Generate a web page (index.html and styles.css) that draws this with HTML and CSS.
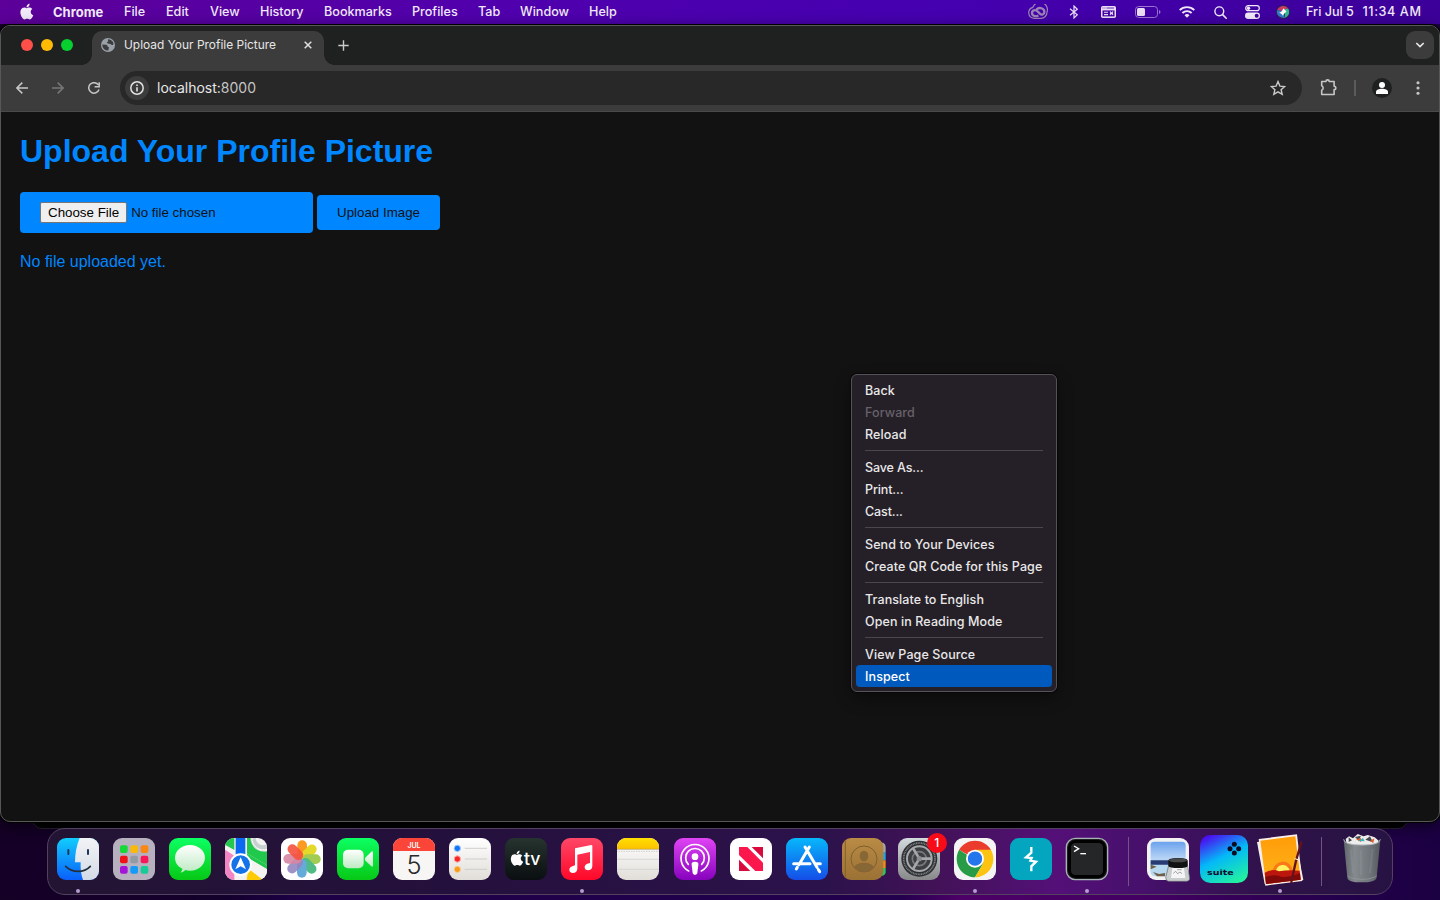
FILE: index.html
```html
<!DOCTYPE html>
<html lang="en">
<head>
<meta charset="utf-8">
<title>Upload Your Profile Picture</title>
<link rel="stylesheet" href="styles.css">
</head>
<body>
<svg class="defs" width="0" height="0" aria-hidden="true">
  <defs>
    <clipPath id="tile"><rect width="126" height="126" rx="27"/></clipPath>
    <path id="apple" d="M17.5 12.6c0-2.6 2.1-3.9 2.2-4-1.2-1.8-3.1-2-3.7-2-1.6-.2-3.1.9-3.9.9s-2-.9-3.4-.9C7 6.700 5.300 7.600 4.400 9.200c-1.900 3.300-.5 8.100 1.400 10.800.9 1.300 2 2.800 3.400 2.700 1.400-.1 1.900-.9 3.500-.9s2.100.9 3.500.9c1.500 0 2.400-1.300 3.300-2.600 1-1.500 1.500-3 1.500-3-.1-.1-3.500-1.400-3.500-4.500zM14.900 4.800c.7-.9 1.200-2.100 1.100-3.300-1.100 0-2.300.7-3.100 1.600-.7.8-1.300 2-1.100 3.200 1.200.1 2.400-.6 3.100-1.500z"/>
    <linearGradient id="gFinder" x2="0" y2="1"><stop stop-color="#12cdfd"/><stop offset="1" stop-color="#0a60fb"/></linearGradient>
    <linearGradient id="gPale" x2="0" y2="1"><stop stop-color="#f3f3f6"/><stop offset="1" stop-color="#d3dbe7"/></linearGradient>
    <linearGradient id="gGreen" x2="0" y2="1"><stop stop-color="#0cff63"/><stop offset="1" stop-color="#07c815"/></linearGradient>
    <linearGradient id="gBubble" x2="0" y2="1"><stop stop-color="#fff"/><stop offset="1" stop-color="#bdeac2"/></linearGradient>
    <linearGradient id="gTv" x2="0" y2="1"><stop stop-color="#26342f"/><stop offset="1" stop-color="#0a0e10"/></linearGradient>
    <linearGradient id="gMusic" x2="0" y2="1"><stop stop-color="#ff4767"/><stop offset="1" stop-color="#ff0728"/></linearGradient>
    <linearGradient id="gNote" x2="0" y2="1"><stop stop-color="#fff"/><stop offset="1" stop-color="#e1ded9"/></linearGradient>
    <linearGradient id="gYellow" x2="0" y2="1"><stop stop-color="#ffdf00"/><stop offset="1" stop-color="#fdc000"/></linearGradient>
    <linearGradient id="gPod" x2="0" y2="1"><stop stop-color="#e044f5"/><stop offset="1" stop-color="#8703bd"/></linearGradient>
    <linearGradient id="gStore" x2="0" y2="1"><stop stop-color="#07b7fb"/><stop offset="1" stop-color="#154ee8"/></linearGradient>
    <linearGradient id="gBook" x2="0" y2="1"><stop stop-color="#b98b45"/><stop offset="1" stop-color="#9b7135"/></linearGradient>
    <linearGradient id="gGear" x2="0" y2="1"><stop stop-color="#d2dadc"/><stop offset="1" stop-color="#88888a"/></linearGradient>
    <linearGradient id="gSuite" x1=".25" y1="0" x2=".75" y2="1"><stop stop-color="#4a10f0"/><stop offset=".45" stop-color="#04b8f8"/><stop offset="1" stop-color="#22f2a0"/></linearGradient>
    <linearGradient id="gSun" x2="0" y2="1"><stop stop-color="#ff9d08"/><stop offset="1" stop-color="#ffb31c"/></linearGradient>
    <linearGradient id="gBin" x2="1" y2="0"><stop stop-color="#60666a"/><stop offset=".3" stop-color="#858a8e"/><stop offset=".7" stop-color="#70767b"/><stop offset="1" stop-color="#54595e"/></linearGradient>
    <linearGradient id="gSky" x2="0" y2="1"><stop stop-color="#6aa2ed"/><stop offset=".5" stop-color="#b8d4f5"/></linearGradient>
  </defs>
</svg>

<header class="menubar">
  <nav class="menus">
    <svg class="apple-logo" viewBox="3 1 19 22"><use href="#apple"/></svg>
    <span class="app-name">Chrome</span><span>File</span><span>Edit</span><span>View</span><span>History</span><span>Bookmarks</span><span>Profiles</span><span>Tab</span><span>Window</span><span>Help</span>
  </nav>
  <div class="tray">
    <svg viewBox="0 0 20 16" width="20" height="16"><path d="M6 14.300A5.600 5.600 0 0 1 4.900 3.300 7.300 7.300 0 0 1 19 8.200a6 6 0 0 1-6 6.100z" fill="none" stroke="#9c84b6" stroke-width="1.200"/><path d="M10.400 11.400c-2.800 1.600-6.400.6-6.400-2.300 0-3 3.400-3.800 5.600-1.700l2.200 2.200c1.800 1.800 4.600.8 4.600-1.700 0-3.700-5.200-5.200-8-2.400" fill="none" stroke="#9c84b6" stroke-width="2.300"/></svg>
    <svg viewBox="0 0 10 14" width="10" height="14"><path d="M1 3.700l7.300 6.100L5 13V1l3.300 3.200L1 10.300" fill="none" stroke="#e9def5" stroke-width="1.200"/></svg>
    <svg viewBox="0 0 15 12" width="15" height="12"><rect width="15" height="12" rx="1.800" fill="#e9def5"/><path d="M1.500 4.400h12v6h-12z" fill="#4500a5"/><path d="M1.500 2h1M3.500 2h1M5.500 2h7.500" stroke="#4500a5" stroke-width=".8"/><path d="M3 6.300h4M3 8.600h4M9 5.500l3 3.500M12 5.500L9 9M9 7.200h3" stroke="#e9def5" stroke-width="1.100"/></svg>
    <svg viewBox="0 0 26 12" width="26" height="12"><rect x=".5" y=".5" width="22" height="11" rx="3.200" fill="none" stroke="#9975d0"/><rect x="2" y="2" width="8" height="8" rx="1.500" fill="#e9def5"/><path d="M24 4v4q1.500-.5 1.500-2T24 4z" fill="#9975d0"/></svg>
    <svg viewBox="0 0 16 12" width="16" height="12"><g fill="none" stroke="#f0e9f8" stroke-width="1.900"><path d="M.7 4.200a10.300 10.300 0 0 1 14.600 0"/><path d="M3.400 7a6.500 6.500 0 0 1 9.200 0"/></g><path d="M8 11.800L5.500 9.300a3.500 3.500 0 0 1 5 0z" fill="#f0e9f8"/></svg>
    <svg viewBox="0 0 13 13" width="13" height="13"><circle cx="5.300" cy="5.300" r="4.400" fill="none" stroke="#f0e9f8" stroke-width="1.400"/><path d="M8.600 8.600l3.600 3.600" stroke="#f0e9f8" stroke-width="1.600" stroke-linecap="round"/></svg>
    <svg viewBox="0 0 15 14" width="15" height="14"><rect x=".7" y=".7" width="13.600" height="5" rx="2.500" fill="none" stroke="#f0e9f8" stroke-width="1.200"/><circle cx="3.500" cy="3.200" r="1.700" fill="#f0e9f8"/><rect y="7.600" width="15" height="6.300" rx="3.150" fill="#f0e9f8"/><circle cx="11.700" cy="10.750" r="2" fill="#4000a2"/></svg>
    <svg viewBox="0 0 14 14" width="14" height="14"><circle cx="7" cy="7" r="7" fill="#31214e"/><path d="M1 5.500C3 0 10-.5 12.500 4 9 3 8 5 7 7 5 6 3 5 1 5.500z" fill="#c93c68"/><path d="M12.500 4c2 5-1 8.500-4.500 9C10 10 9 8 7 7c1-2 3-4 5.500-3z" fill="#31bb92"/><path d="M1 5.500C0 9 3 13 8 13c1-3 0-5-1-6-2-1.500-4-2-6-1.500z" fill="#3579c9"/><path d="M3 7c2 1 3-1 4-3s2 2 3.500 2C9 8.500 8 8 7 11 6 9 5 9 3 7z" fill="#fff"/></svg>
  </div>
  <time class="clock"><span>Fri Jul 5</span><span class="hour">11:34 AM</span></time>
</header>

<div class="back-window"></div>

<section class="window">
  <div class="tabstrip">
    <div class="lights"><i class="light close"></i><i class="light min"></i><i class="light max"></i></div>
    <div class="tab">
      <svg viewBox="0 0 14 14" width="14" height="14"><circle cx="7" cy="7" r="7" fill="#9aa0a8"/><path d="M1.300 6.500L5 6.800c1.300.2 1.800 1 1.500 2L8 9.200 7.300 12.600A5.700 5.700 0 0 1 1.300 6.500zM6.900 1.300c2.300 0 4.500 1.200 5.500 3.700l-.2 1.800c-1 .5-2.200.2-2.600-.8L6.800 5.600 5.700 4.300l1.500-.7z" fill="#3c3c3c"/></svg>
      <span class="tab-title">Upload Your Profile Picture</span>
      <svg viewBox="0 0 8 8" width="8" height="8"><path d="M.7.7l6.600 6.600M7.300.7L.7 7.300" stroke="#e0e0e0" stroke-width="1.500"/></svg>
    </div>
    <svg class="new-tab" viewBox="0 0 11 11" width="11" height="11"><path d="M5.500.3v10.400M.3 5.500h10.400" stroke="#c9cac9" stroke-width="1.400"/></svg>
    <div class="tab-search"><svg viewBox="0 0 10 6" width="10" height="6"><path d="M1.300 1L5 4.600 8.700 1" fill="none" stroke="#e4e4e4" stroke-width="1.700"/></svg></div>
  </div>
  <div class="toolbar">
    <div class="nav-buttons">
      <svg viewBox="0 0 12 12" width="12" height="12"><path d="M12 6H1M6.300.6L.9 6l5.400 5.400" fill="none" stroke="#c7c7c7" stroke-width="1.500"/></svg>
      <svg viewBox="0 0 12 12" width="12" height="12"><path d="M0 6h11M5.700.6L11.100 6l-5.400 5.400" fill="none" stroke="#777" stroke-width="1.500"/></svg>
      <svg viewBox="0 0 12 12" width="12" height="12"><path d="M10.300 2.900A5.250 5.250 0 1 0 11 7.500M11.200.2v4.600H6.600" fill="none" stroke="#c7c7c7" stroke-width="1.500"/></svg>
    </div>
    <div class="omnibox">
      <span class="site-info"><svg viewBox="0 0 14 14" width="14" height="14"><circle cx="7" cy="7" r="6.200" fill="none" stroke="#e3e3e3" stroke-width="1.500"/><path d="M7 6.200v4.200M7 3.400v1.700" stroke="#e3e3e3" stroke-width="1.600"/></svg></span>
      <span class="url">localhost:<span class="port">8000</span></span>
      <svg class="star" viewBox="0 0 16 16" width="16" height="16"><path d="M8 1.600l1.900 4.500 4.800.4-3.600 3.200 1.100 4.700L8 11.900l-4.200 2.500 1.100-4.700L1.300 6.500l4.800-.4z" fill="none" stroke="#c9c9c9" stroke-width="1.400"/></svg>
    </div>
    <div class="actions">
      <svg viewBox="0 0 17 17" width="17" height="17"><path d="M1.700 2.500H6a1.600 1.600 0 0 1 3.200 0h4.900v4.700a1.700 1.700 0 0 1 0 3.400v4.900H1.700v-4.300a2.400 2.400 0 0 0 0-4.400z" fill="none" stroke="#c7c7c7" stroke-width="1.600" stroke-linejoin="round"/></svg>
      <i class="bar-sep"></i>
      <span class="avatar"><svg viewBox="0 0 12 12" width="12" height="12" fill="#fff"><circle cx="6" cy="3" r="3"/><path d="M0 12v-2c0-2.200 3-3.200 6-3.200s6 1 6 3.200v2z"/></svg></span>
      <svg viewBox="0 0 4 14" width="4" height="14" fill="#c7c7c7"><circle cx="2" cy="1.700" r="1.550"/><circle cx="2" cy="7" r="1.550"/><circle cx="2" cy="12.300" r="1.550"/></svg>
    </div>
  </div>
  <main class="page">
    <h1>Upload Your Profile Picture</h1>
    <form class="upload-form">
      <input class="file-input" type="file">
      <button class="upload-button" type="button">Upload Image</button>
    </form>
    <p>No file uploaded yet.</p>
  </main>
</section>

<ul class="context-menu">
  <li><span>Back</span></li><li class="disabled"><span>Forward</span></li><li><span>Reload</span></li>
  <li class="rule"></li>
  <li class="dotted"><span>Save As...</span></li><li class="dotted"><span>Print...</span></li><li class="dotted"><span>Cast...</span></li>
  <li class="rule"></li>
  <li><span>Send to Your Devices</span></li><li><span>Create QR Code for this Page</span></li>
  <li class="rule"></li>
  <li><span>Translate to English</span></li><li><span>Open in Reading Mode</span></li>
  <li class="rule"></li>
  <li><span>View Page Source</span></li><li class="selected"><span>Inspect</span></li>
</ul>

<footer class="dock">
  <div class="slot running"><svg viewBox="0 0 126 126"><g clip-path="url(#tile)"><rect width="126" height="126" fill="url(#gFinder)"/><path d="M68 0C58 24 54 48 54 73h17c-1 19 1 36 7 53h48V0z" fill="url(#gPale)"/><path d="M34 36v12M93 36v12" stroke="#1d3557" stroke-width="6" stroke-linecap="round"/><path d="M26 85c20 20 55 20 74 0" fill="none" stroke="#23303c" stroke-width="5" stroke-linecap="round"/></g></svg></div>
  <div class="slot"><svg viewBox="0 0 126 126"><rect width="126" height="126" rx="27" fill="#b7b0be"/><rect x="21" y="22" width="23" height="23" rx="6" fill="#15d936"/><rect x="52" y="22" width="23" height="23" rx="6" fill="#f9b90b"/><rect x="83" y="22" width="23" height="23" rx="6" fill="#fb8713"/><rect x="21" y="53" width="23" height="23" rx="6" fill="#f01218"/><rect x="52" y="53" width="23" height="23" rx="6" fill="#929aa3"/><rect x="83" y="53" width="23" height="23" rx="6" fill="#fa1759"/><rect x="21" y="84" width="23" height="23" rx="6" fill="#a414d8"/><rect x="52" y="84" width="23" height="23" rx="6" fill="#149bf8"/><rect x="83" y="84" width="23" height="23" rx="6" fill="#16cb98"/></svg></div>
  <div class="slot"><svg viewBox="0 0 126 126"><rect width="126" height="126" rx="27" fill="url(#gGreen)"/><path d="M63 21c25 0 45 17 45 38S88 98 63 98c-5 0-10-1-14-2-4 4-9 7-15 8 4-4 6-8 6-12C26 85 18 73 18 59c0-21 20-38 45-38z" fill="url(#gBubble)"/></svg></div>
  <div class="slot"><svg viewBox="0 0 126 126"><g clip-path="url(#tile)"><rect width="126" height="126" fill="#f4f3f1"/><path d="M0 0h28v36L0 20z" fill="#24c84c"/><path d="M0 35l28 18v73H0z" fill="#f285c4"/><path d="M66 0h14l0 8c2 24 22 36 46 32v42L66 46z" fill="#20c94b"/><path d="M32 0h29v75H32z" fill="#0b69ef"/><path d="M66 46l60 36v12L66 58z" fill="#20c94b"/><path d="M66 58l60 36v32h-12L60 88z" fill="#f4f3f1"/><path d="M70 92l44 34H65z" fill="#ffcb05"/><path d="M84 0a30 30 0 0 0 42 27" fill="none" stroke="#c9d0d0" stroke-width="16"/><path d="M81 0a34 34 0 0 0 45 34" fill="none" stroke="#fff" stroke-width="3"/><circle cx="47" cy="80" r="31" fill="#1473e8" stroke="#fff" stroke-width="6"/><path d="M47 58l16 36-16-9-16 9z" fill="#fff"/></g></svg></div>
  <div class="slot"><svg viewBox="0 0 126 126"><rect width="126" height="126" rx="27" fill="#fff"/><g opacity=".93"><rect x="49" y="7" width="29" height="55" rx="14.500" fill="#fb9414"/><rect x="49" y="7" width="29" height="55" rx="14.500" fill="#e2d719" transform="rotate(45 63 63)"/><rect x="49" y="7" width="29" height="55" rx="14.500" fill="#9ac944" transform="rotate(90 63 63)"/><rect x="49" y="7" width="29" height="55" rx="14.500" fill="#43b67b" transform="rotate(135 63 63)"/><rect x="49" y="7" width="29" height="55" rx="14.500" fill="#5aa5d7" transform="rotate(180 63 63)"/><rect x="49" y="7" width="29" height="55" rx="14.500" fill="#8c7dbb" fill-opacity=".9" transform="rotate(225 63 63)"/><rect x="49" y="7" width="29" height="55" rx="14.500" fill="#d57c9b" fill-opacity=".9" transform="rotate(270 63 63)"/><rect x="49" y="7" width="29" height="55" rx="14.500" fill="#f5452d" fill-opacity=".9" transform="rotate(315 63 63)"/></g></svg></div>
  <div class="slot"><svg viewBox="0 0 126 126"><rect width="126" height="126" rx="27" fill="url(#gGreen)"/><rect x="18" y="35" width="62" height="56" rx="15" fill="url(#gBubble)"/><path d="M84 60l19-19q5-3 5 3v38q0 6-5 3L84 67z" fill="url(#gBubble)"/></svg></div>
  <div class="slot"><svg viewBox="0 0 126 126"><g clip-path="url(#tile)"><rect width="126" height="126" fill="#f7f6f5"/><rect width="126" height="39" fill="#fb4538"/></g><text class="cal-month" x="63" y="29" text-anchor="middle">JUL</text><text class="cal-day" x="63" y="107" text-anchor="middle">5</text></svg></div>
  <div class="slot"><svg viewBox="0 0 126 126"><rect width="126" height="126" rx="27" fill="url(#gNote)"/><g stroke-width="3"><circle cx="25" cy="31" r="9.500" fill="#1275f8" stroke="#a4ccf8"/><circle cx="25" cy="63" r="9.500" fill="#fb2322" stroke="#f8b1b1"/><circle cx="25" cy="94" r="9.500" fill="#f99a18" stroke="#f5d29c"/></g><path d="M47 31h67M47 63h67M47 94h67" stroke="#c9c8c8" stroke-width="2.500"/></svg></div>
  <div class="slot"><svg viewBox="0 0 126 126"><rect width="126" height="126" rx="27" fill="url(#gTv)"/><use href="#apple" fill="#fff" transform="translate(10 35) scale(2.120)"/><text class="tv-label" x="57" y="82">tv</text></svg></div>
  <div class="slot running"><svg viewBox="0 0 126 126"><rect width="126" height="126" rx="27" fill="url(#gMusic)"/><path d="M42 31l49-10q3 0 3 3v60c0 9-6 13-13 13-6 0-10-4-10-9 0-9 9-12 16-13V42L49 50v42c0 8-6 13-14 13-6 0-10-4-10-9 0-10 10-11 17-14z" fill="#fff"/></svg></div>
  <div class="slot"><svg viewBox="0 0 126 126"><g clip-path="url(#tile)"><rect width="126" height="126" fill="url(#gNote)"/><rect width="126" height="33" fill="url(#gYellow)"/><path d="M0 34h126" stroke="#b59a50" stroke-width="2"/><path d="M2 40h124" stroke="#bcbab8" stroke-width="3" stroke-dasharray="2 3"/><path d="M0 64h126M0 94h126" stroke="#ceccc8" stroke-width="2"/></g></svg></div>
  <div class="slot"><svg viewBox="0 0 126 126"><rect width="126" height="126" rx="27" fill="url(#gPod)"/><g fill="none" stroke="#fff" stroke-width="5" stroke-linecap="round"><path d="M44 99a42 42 0 1 1 38 0"/><path d="M43 79a28 28 0 1 1 40 0"/></g><circle cx="63" cy="56" r="10" fill="#fff"/><path d="M63 71c8 0 11 3 10 10l-3 24c-1 7-13 7-14 0l-3-24c-1-7 2-10 10-10z" fill="#fff"/></svg></div>
  <div class="slot"><svg viewBox="0 0 126 126"><rect width="126" height="126" rx="27" fill="#fff"/><path d="M27 27h25l47 47v25H76L27 51z" fill="#fb174c"/><path d="M65 27h34v34zM27 65l34 34H27z" fill="#d90b3e"/></svg></div>
  <div class="slot"><svg viewBox="0 0 126 126"><rect width="126" height="126" rx="27" fill="url(#gStore)"/><g stroke="#fff" stroke-width="9" stroke-linecap="round"><path d="M70 29L39 82M31 95l3-5M57 29l36 61M97 97l4 6M23 79h49M92 79h11" transform="translate(0 -2)"/></g></svg></div>
  <div class="slot"><svg viewBox="0 0 126 126"><path d="M108 14h16q7 4 7 13v17h-23z" fill="#a5a5a2"/><path d="M108 44h23v23h-23z" fill="#23a8db"/><path d="M108 67h23v23h-23z" fill="#f08d13"/><path d="M108 90h23v14q-2 7-9 9h-14z" fill="#28c959"/><rect width="124" height="126" rx="27" fill="url(#gBook)"/><path d="M10 7v112" stroke="#84602d" stroke-width="3"/><circle cx="66" cy="63" r="39" fill="none" stroke="#80602f" stroke-width="3"/><ellipse cx="66" cy="54" rx="13" ry="16" fill="#866735"/><path d="M38 88c3-18 53-18 56 0-14 18-42 18-56 0z" fill="#866735"/></svg></div>
  <div class="slot"><svg viewBox="0 0 126 126"><rect width="126" height="126" rx="27" fill="url(#gGear)"/><circle cx="64" cy="62" r="54" fill="#2e3034"/><circle cx="64" cy="62" r="47" fill="none" stroke="#85878a" stroke-width="5" stroke-dasharray="3 2"/><circle cx="64" cy="62" r="37" fill="#3d3f42" stroke="#a6a8aa" stroke-width="6"/><circle cx="64" cy="62" r="21" fill="none" stroke="#77797c" stroke-width="5"/><path d="M64 62L44 29M64 62h38M64 62L44 95" stroke="#a6a8aa" stroke-width="8"/><circle cx="64" cy="62" r="8" fill="#8b8d90"/></svg><b class="badge">1</b></div>
  <div class="slot running"><svg viewBox="0 0 126 126"><rect width="126" height="126" rx="27" fill="#f5f4f5"/><path d="M63 63L15.400 35.500A55 55 0 0 1 110.600 35.500z" fill="#ea3b2d"/><path d="M63 63h-5L15.400 35.500A55 55 0 0 0 63 118l24-41z" fill="#279b45"/><path d="M63 35.500h47.600A55 55 0 0 1 63 118l24-41z" fill="#fcc410"/><circle cx="63" cy="62" r="27" fill="#fff"/><circle cx="63" cy="62" r="21.500" fill="#2575ed"/></svg></div>
  <div class="slot"><svg viewBox="0 0 126 126"><rect width="126" height="126" rx="27" fill="#03a5bf"/><path d="M64 27v17L48 58l17 2-4 8 17 3-14 14v15" fill="none" stroke="#fff" stroke-width="7"/></svg></div>
  <div class="slot running"><svg viewBox="0 0 126 126"><rect x="1" y="1" width="124" height="124" rx="27" fill="#1f2021" stroke="#a8b2b5" stroke-width="4"/><rect x="6" y="6" width="114" height="114" rx="23" fill="#000"/><rect x="15" y="15" width="96" height="96" rx="13" fill="#252627"/><path d="M24 24l14 8-14 9" fill="none" stroke="#fff" stroke-width="4"/><path d="M43 47h17" stroke="#fff" stroke-width="4"/></svg></div>
  <i class="dock-rule"></i>
  <div class="slot"><svg viewBox="0 0 126 126"><rect width="126" height="126" rx="27" fill="#f2f2f3"/><path d="M11 22q0-11 11-11h83q11 0 11 11v91H25q-14 0-14-13z" fill="url(#gSky)"/><path d="M11 67h105v48H25q-14 0-14-15z" fill="#b7d8f1"/><path d="M11 67h105v13H11z" fill="#273a72"/><path d="M11 80l18 6-18 8zM18 102l18 6 18-3v10H30z" fill="#715f46"/><path d="M69 66l-13 53q0 9 9 11h55q9-2 8-10l-9-54z" fill="#c9cdce" stroke="#606569" stroke-width="2"/><path d="M77 84l-5 36h43l-5-36z" fill="#f4f4f4"/><path d="M79 106l7-6 6 7 7-5 6 5M90 95h14" fill="none" stroke="#77797c" stroke-width="2"/><path d="M64 68q0-8 29-8t29 8v16q-2 6-28 6t-30-6z" fill="#111"/><ellipse cx="93" cy="67" rx="28" ry="6" fill="#48494b"/></svg></div>
  <div class="slot"><svg class="large" viewBox="0 0 144 156"><rect y="3" width="144" height="144" rx="31" fill="url(#gSuite)"/><g fill="#090c23"><circle cx="103" cy="31" r="7.500"/><circle cx="90" cy="44" r="7.500"/><circle cx="116" cy="44" r="7.500"/><circle cx="103" cy="57" r="7.500"/></g><text class="suite-label" x="21" y="124" textLength="80" lengthAdjust="spacingAndGlyphs">suite</text></svg></div>
  <div class="slot running"><svg class="large" viewBox="0 0 144 156"><path d="M3 24L117 10l25 128-116 12z" fill="#eee"/><path d="M8 15l115-14 16 140-111 14z" fill="#f9eee7"/><path d="M13 20l105-13 16 130-104 13z" fill="url(#gSun)"/><path d="M51 116a29 29 0 0 1 59-7z" fill="#fb7817"/><path d="M60 116a20 20 0 0 1 41-5z" fill="#fff262"/><path d="M26 116q22-13 43-4 29-6 62-2l3 27-104 13z" fill="#bd160d"/><path d="M28 129q30-10 50 0 28 0 54-12l2 20-104 13z" fill="#810909"/><path d="M136 25L120 80l-14 64" fill="none" stroke="#62131d" stroke-width="7" stroke-linecap="round"/><path d="M116 74l10 3" stroke="#fff" stroke-width="3"/></svg></div>
  <i class="dock-rule"></i>
  <div class="slot"><svg class="large" viewBox="0 0 112 156"><path d="M7 15l10-8 12 6L43 0l18 7 12-4 21 7 12 10-8 18H12z" fill="#ededed"/><path d="M35 9l18-4-7 15zM66 17l14-10 9 18zM16 10l10 9-10 5z" fill="#464a4f"/><path d="M38 16l15-4v12zM80 21l13-8-3 14z" fill="#e25c2d"/><path d="M45 21l14-9 5 10z" fill="#38b6b7"/><path d="M1 17Q6 33 56 33t55-16L100 131q-3 14-45 14t-43-14z" fill="url(#gBin)"/><path d="M1 16q1 17 55 17t55-17" fill="none" stroke="#b5b9bc" stroke-width="3"/><path d="M13 125q12 11 43 11t44-11" fill="none" stroke="#999da0" stroke-width="2"/><path d="M22 46l8 72M52 49l1 74M88 45l-8 72" stroke="#b2b5b7" stroke-opacity=".15" stroke-width="6"/></svg></div>
</footer>
</body>
</html>
```
FILE: styles.css
```css
* { box-sizing: border-box; }
body {
  position: relative;
  margin: 0;
  width: 1440px;
  height: 900px;
  overflow: hidden;
  display: flex;
  flex-direction: column;
  font-family: Inter, "Liberation Sans", sans-serif;
  background: linear-gradient(90deg, #150026 0, #13002b 220px, #1d0046 300px, #23004d 900px, #4d0067 960px, #430062 1150px, #23004b 1340px, #1b0042 1440px);
}
.defs { position: absolute; }
svg { display: block; flex: none; }

.menubar {
  height: 24px;
  flex: none;
  display: flex;
  align-items: center;
  padding: 0 19px 0 20px;
  background: linear-gradient(90deg, #5c0099, #5000ad 35%, #4500b0 65%, #3c0099);
  color: #f1eaf8;
  font-size: 12.600px;
  font-weight: 500;
  line-height: 24px;
  white-space: nowrap;
}
.menus {
  display: grid;
  grid-template-columns: 13px 51px 22px 24px 30px 44px 68px 46px 22px 49px 28px;
  column-gap: 20px;
  align-items: center;
}
.app-name { font-weight: 700; font-size: 13px; }
.apple-logo { width: 14px; height: 17px; fill: #f1eaf8; margin-top: -2px; }
.tray {
  margin-left: auto;
  display: grid;
  grid-template-columns: 41px 32px 34px 44px 34.500px 31.500px 31px 14px;
  align-items: center;
}
.clock { display: flex; justify-content: space-between; width: 115px; margin-left: 16px; }
.hour { letter-spacing: .6px; margin-right: -.5px; }

.back-window {
  position: absolute;
  left: 32px;
  top: 800px;
  width: 1376px;
  height: 29px;
  background: #020103;
  border: 1px solid #2a2530;
  border-radius: 0 0 10px 10px;
}
.window {
  position: relative;
  margin-top: 1px;
  height: 797px;
  flex: none;
  display: flex;
  flex-direction: column;
  overflow: hidden;
  border: 1px solid #575757;
  border-radius: 10px;
  background: #121212;
  box-shadow: 0 0 0 1px #000, 0 4px 16px rgba(0, 0, 0, .6);
}
.tabstrip {
  height: 39px;
  flex: none;
  display: flex;
  align-items: center;
  background: #1f2120;
  padding: 0 5px 1px 20px;
}
.lights { display: flex; gap: 8px; width: 71px; }
.light { width: 12px; height: 12px; border-radius: 50%; }
.close { background: #ff4f48; }
.min { background: #ffba06; }
.max { background: #06cf2f; }
.tab {
  position: relative;
  align-self: flex-end;
  width: 232px;
  height: 34px;
  margin-bottom: -1px;
  padding: 0 12px 6px 9px;
  display: flex;
  align-items: center;
  background: #3c3c3c;
  border-radius: 10px 10px 0 0;
}
.tab::before, .tab::after {
  content: "";
  position: absolute;
  bottom: 0;
  width: 10px;
  height: 10px;
}
.tab::before { left: -10px; background: radial-gradient(circle at 0 0, transparent 9.500px, #3c3c3c 10px); }
.tab::after { right: -10px; background: radial-gradient(circle at 100% 0, transparent 9.500px, #3c3c3c 10px); }
.tab-title {
  margin-left: 9px;
  flex: 1;
  color: #e6e6e6;
  font-size: 11.900px;
  line-height: 14px;
  letter-spacing: .02px;
  white-space: nowrap;
}
.new-tab { margin-left: 14px; }
.tab-search {
  margin-left: auto;
  width: 28px;
  height: 28px;
  display: grid;
  place-items: center;
  border-radius: 9px;
  background: #3c3c3c;
}
.toolbar {
  height: 47px;
  flex: none;
  display: flex;
  align-items: center;
  background: #3c3c3c;
  border-bottom: 1px solid #4a4a4a;
  padding: 0 0 1px 15px;
}
.nav-buttons { display: flex; gap: 24px; width: 104px; }
.omnibox {
  width: 1182px;
  height: 34px;
  display: flex;
  align-items: center;
  background: #282828;
  border-radius: 17px;
  padding: 0 16px 0 5px;
}
.site-info {
  width: 24px;
  height: 24px;
  border-radius: 50%;
  display: grid;
  place-items: center;
  background: #3c3c3c;
}
.url { margin-left: 8px; color: #e6e6e6; font-size: 14px; line-height: 18px; }
.port { color: #c5c5c5; }
.star { margin-left: auto; }
.actions { display: flex; align-items: center; padding-left: 18px; }
.bar-sep { width: 2px; height: 16px; margin-left: 17px; background: #5b5b5b; }
.avatar {
  width: 20px;
  height: 20px;
  margin: 0 24px 0 16px;
  border-radius: 50%;
  display: grid;
  place-items: center;
  background: #1f2120;
}

.page {
  padding: 20px 19px;
  color: #0086ff;
  font-family: "Liberation Sans", Arial, sans-serif;
}
.page h1 { margin: 0; font-size: 32px; line-height: 38px; white-space: nowrap; }
.upload-form { display: flex; align-items: center; gap: 4px; margin-top: 22px; }
.file-input {
  width: 293px;
  height: 41px;
  padding: 10px 20px;
  border-radius: 4px;
  background: #0086ff;
  color: #121212;
  font: 13.333px "Liberation Sans", Arial, sans-serif;
}
.file-input::file-selector-button {
  height: 21px;
  padding: 1px 7px;
  margin-right: 4px;
  color: #000;
  background: #efefef;
  border: 1px solid #767676;
  border-radius: 2px;
  font: inherit;
}
.upload-button {
  width: 123px;
  height: 35px;
  padding: 0;
  border: 0;
  border-radius: 4px;
  background: #0086ff;
  color: #121212;
  font: 13.333px "Liberation Sans", Arial, sans-serif;
}
.page p { margin: 20px 0 0; font-size: 16px; line-height: 18px; }

.context-menu {
  position: absolute;
  left: 851px;
  top: 374px;
  width: 206px;
  height: 318px;
  margin: 0;
  padding: 4px;
  list-style: none;
  background: #252027;
  border: 1px solid #565258;
  border-radius: 6px;
  box-shadow: 0 0 0 1px #070707, 0 6px 16px rgba(0, 0, 0, .4);
  color: #e9e8e9;
  font-size: 12.500px;
  font-weight: 500;
  letter-spacing: .1px;
}
.context-menu li { height: 22px; padding: 1px 0 0 9px; line-height: 22px; border-radius: 4px; white-space: nowrap; }
.context-menu .dotted { letter-spacing: -.12px; }
.context-menu .disabled { color: #67626a; }
.context-menu .rule { height: 1px; margin: 5px 9px; padding: 0; background: #4b464e; border-radius: 0; }
.context-menu .selected { background: #0059bd; color: #fff; }

.dock {
  position: absolute;
  left: 47px;
  top: 828px;
  width: 1346px;
  height: 67px;
  display: flex;
  padding: 0 2px;
  border: 1px solid #52415f;
  border-radius: 18px;
  background: linear-gradient(90deg, #231433, #24103c 30%, #2c124b 58%, #421257 66%, #541078 75%, #45106a 82%, #2e1248 91%, #271343);
}
.slot {
  position: relative;
  width: 56.060px;
  flex: none;
  display: flex;
  justify-content: center;
  padding-top: 9px;
}
.slot > svg { width: 42px; height: 42px; overflow: visible; }
.slot > .large { width: 48px; height: 52px; margin-top: -4px; }
.running::after {
  content: "";
  position: absolute;
  left: 26px;
  top: 60px;
  width: 4px;
  height: 4px;
  border-radius: 50%;
  background: #b59bd0;
}
.badge {
  position: absolute;
  left: 36px;
  top: 4px;
  width: 20px;
  height: 20px;
  border-radius: 50%;
  background: #f80b18;
  color: #fff;
  font-size: 12px;
  font-weight: 500;
  line-height: 20px;
  text-align: center;
}
.dock-rule { width: 1px; height: 49px; flex: none; margin: 8px 11.400px 0 13px; background: #745485; }
.cal-month { font: 600 21px Inter, sans-serif; fill: #fff; }
.cal-day { font: 300 76px Inter, sans-serif; fill: #29292b; }
.tv-label { font: 500 53px Inter, sans-serif; fill: #fff; }
.suite-label { font: 700 22px "DejaVu Sans", sans-serif; fill: #080d28; }
```
